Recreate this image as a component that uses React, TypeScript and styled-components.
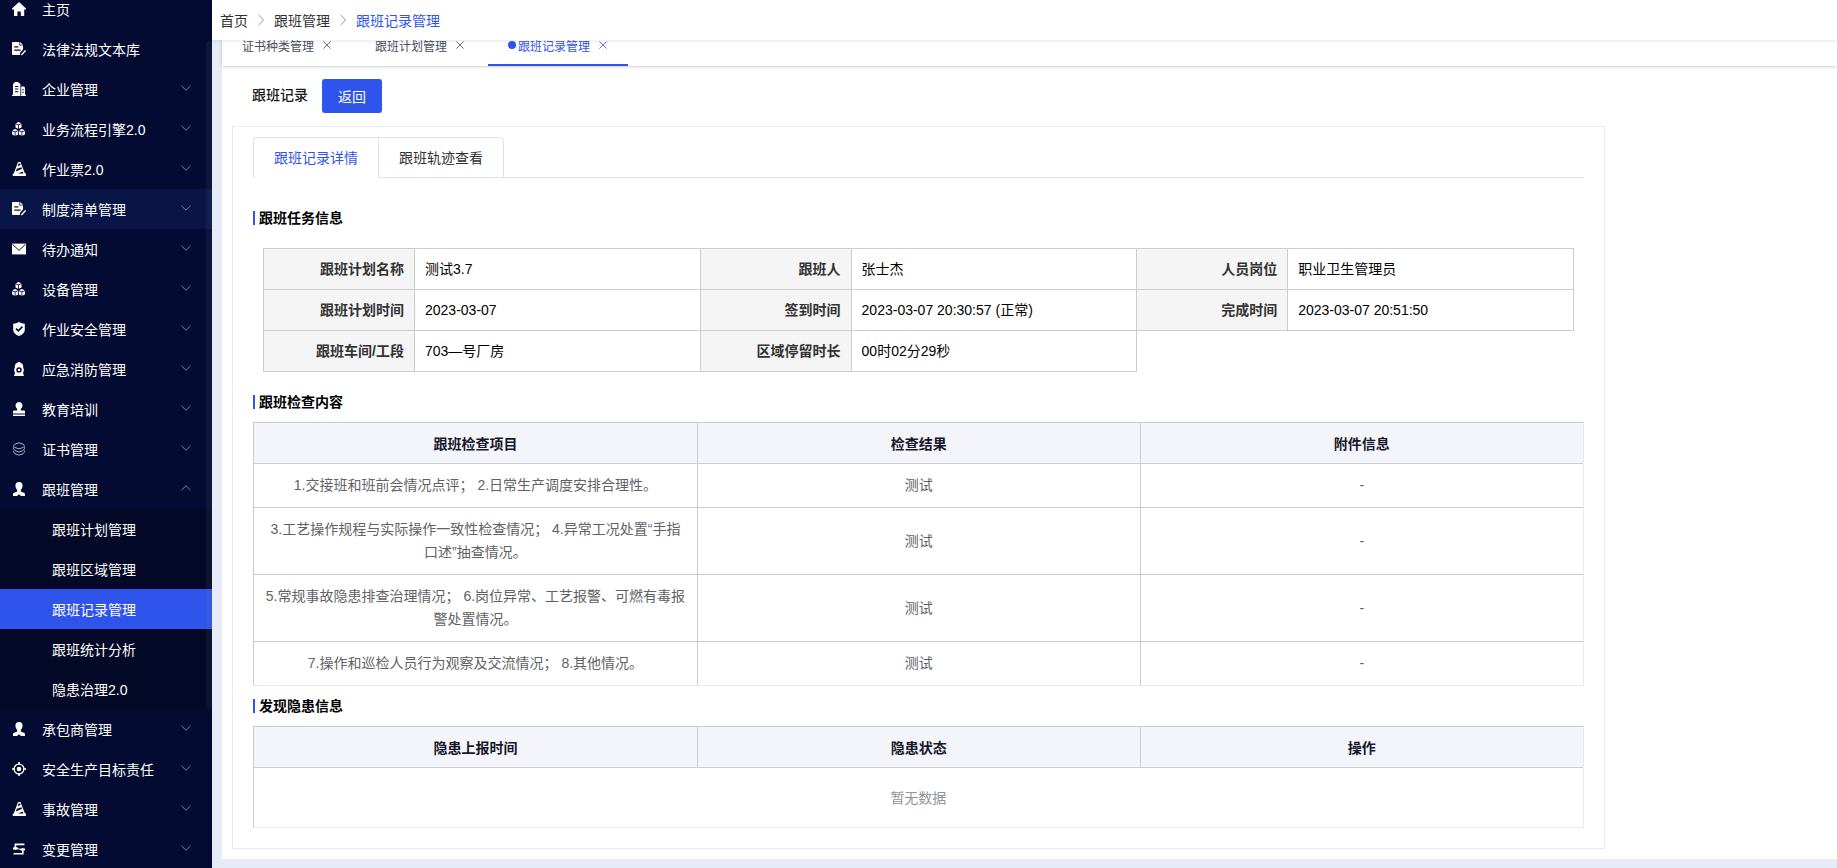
import React from "react";
import styled, { createGlobalStyle } from "styled-components";

const BLUE = "#2f54eb";
const FONT = '"Liberation Sans", "Noto Sans CJK SC", sans-serif';

const GlobalStyle = createGlobalStyle`
  *, *::before, *::after { box-sizing: border-box; }
  body { margin: 0; background: #e5ecf8; font-family: ${FONT}; font-size: 14px; color: #000; }
  button { font-family: inherit; font-size: inherit; cursor: pointer; border: 0; background: none; padding: 0; }
  a { color: inherit; text-decoration: none; }
`;

/* ---------- icons ---------- */

type IconName =
  | "home" | "doc" | "building" | "cubes" | "cone" | "mail" | "shield"
  | "hydrant" | "stamp" | "layers" | "user" | "aim" | "swap";

const glyphs: Record<IconName, React.ReactNode> = {
  home: <path fill="currentColor" d="M7 0 14 6.6V7.6H12.2V14H8.8V9.6H5.4V14H2V7.6H0V6.6Z" />,
  doc: (
    <>
      <path fill="currentColor" fillRule="evenodd" d="M1 0H7.4V3.6H11V7.6L8 10.8V13H1Q0 13 0 12V1Q0 0 1 0ZM2.2 4.2V5.4H6.4V4.2ZM2.2 7.6V8.8H8.6V7.6Z" />
      <path fill="currentColor" d="M8.2 0 11 2.8H8.2Z" />
      <path fill="none" stroke="currentColor" strokeWidth="1.5" d="M13.6 8.4 9.4 13" />
    </>
  ),
  building: (
    <>
      <path fill="currentColor" fillRule="evenodd" d="M1 2 3 0H6L8.4 2V14H1ZM3 4V5H6.4V4ZM3 6.6V7.6H6.4V6.6ZM3 9.2V10.2H6.4V9.2Z" />
      <path fill="currentColor" fillRule="evenodd" d="M9.2 4.6H12L13 5.8V12.8H14V14H9.2ZM10.4 7V8.2H11.6V7ZM10.4 9.8V11H11.6V9.8Z" />
      <path fill="currentColor" d="M0 12.8H3V14H0Z" />
    </>
  ),
  cubes: (
    <>
      {[[6.5, 0], [3.1, 7], [9.9, 7]].map(([x, y]) => (
        <g key={x} transform={`translate(${x} ${y})`}>
          <path fill="currentColor" d="M0 0 2.8 1.2 0 2.4-2.8 1.2ZM-3 2-.4 3.2V6.8L-3 5.6ZM3 2 .4 3.2V6.8L3 5.6Z" />
        </g>
      ))}
    </>
  ),
  cone: (
    <path fill="currentColor" fillRule="evenodd" d="M6 0H8.4L13 11.6H14V14H.8V11.6H1.8ZM6.6 1.6 5.6 4.2 8.6 3 8.2 1.6ZM4.8 6.8 3.8 9.4 10 6.8 9.4 5.2ZM6 11.4H11.4L10.6 9.4Z" />
  ),
  mail: (
    <>
      <path fill="currentColor" d="M0 1.6H14V12.4H0Z" />
      <path fill="none" stroke="#040b32" strokeWidth="1" d="M.6 2.4 7 8.4 13.4 2.4" />
    </>
  ),
  shield: (
    <>
      <path fill="currentColor" d="M7 0Q9.6 1.8 12.8 1.8V8Q12.4 12 7 14 1.6 12 1.2 8V1.8Q4.4 1.8 7 0Z" />
      <path fill="none" stroke="#040b32" strokeWidth="1.6" d="M4 6.6 6.4 8.8 10.4 4.6" />
    </>
  ),
  hydrant: (
    <path fill="currentColor" fillRule="evenodd" d="M5.8 0H8.2V.8Q11 1.4 11.2 4V6.4H11.8V9.6H11.2V12.6H11.8V14H2.2V12.6H2.8V9.6H2.2V6.4H2.8V4Q3 1.4 5.8 .8ZM7 5.2A2.7 2.7 0 1 0 7 10.6 2.7 2.7 0 1 0 7 5.2ZM7 6.7A1.2 1.2 0 1 1 7 9.1 1.2 1.2 0 1 1 7 6.7Z" />
  ),
  stamp: (
    <path fill="currentColor" d="M7 0A3.6 3.6 0 0 1 10 5.4L8.8 7V8.6H12Q13 8.6 13 9.6V11.4H1V9.6Q1 8.6 2 8.6H5.2V7L4 5.4A3.6 3.6 0 0 1 7 0ZM1 12.6H13V14H1Z" />
  ),
  layers: (
    <g fill="none" stroke="currentColor" strokeWidth=".9" opacity=".75">
      <path d="M7 .8Q12.6 2 12.6 4 12.6 5.6 7 6.8 1.4 5.6 1.4 4 1.4 2 7 .8Z" />
      <path d="M1.4 5.2V6.4Q1.8 9 7 10 12.2 9 12.6 6.4V5.2" />
      <path d="M1.4 8.6V9.8Q1.8 12.2 7 13.2 12.2 12.2 12.6 9.8V8.6" />
    </g>
  ),
  user: (
    <path fill="currentColor" d="M7 0Q10.6 0 10.6 3.8 10.6 6.4 8.8 8V9.4L12.4 11Q13 11.4 13 12V14H9L7 12.2 5 14H1V12Q1 11.4 1.6 11L5.2 9.4V8Q3.4 6.4 3.4 3.8 3.4 0 7 0Z" />
  ),
  aim: (
    <>
      <circle cx="7" cy="7" r="4.9" fill="none" stroke="currentColor" strokeWidth="1.3" />
      <circle cx="7" cy="7" r="2.3" fill="currentColor" />
      <path fill="none" stroke="currentColor" strokeWidth="1.6" d="M7 0V3M7 11V14M0 7H3M11 7H14" />
    </>
  ),
  swap: (
    <>
      <path fill="none" stroke="currentColor" strokeWidth="1.6" d="M12.4 2.4H3.4V6M1.6 11.8H10.8V8M6.6 6.8H1M7.4 7.2H13" />
      <path fill="currentColor" d="M.8 5.2H6L3.4 8ZM13.2 8.6H8.2L10.8 5.8Z" />
    </>
  ),
};

const Icon = ({ name }: { name: IconName }) => (
  <svg width="14" height="14" viewBox="0 0 14 14" aria-hidden="true">{glyphs[name]}</svg>
);

const Caret = ({ up }: { up?: boolean }) => (
  <svg width="10" height="6" viewBox="0 0 10 6" fill="none" stroke="#79809c" aria-hidden="true">
    <path d={up ? "M.5 5.2 5 .8 9.5 5.2" : "M.5.8 5 5.2 9.5.8"} />
  </svg>
);

/* ---------- shell ---------- */

const Shell = styled.div`
  display: flex;
  align-items: flex-start;
  min-height: 100vh;
`;

const Sidebar = styled.aside`
  position: sticky;
  top: 0;
  flex: 0 0 212px;
  height: 100vh;
  overflow: hidden;
  background: #040b32;
`;

const ScrollThumb = styled.div`
  position: absolute;
  top: 41px;
  right: 0;
  width: 6px;
  height: 77%;
  border-radius: 4px;
  background: rgba(144, 147, 153, 0.08);
`;

const Menu = styled.nav`
  margin-top: -11px;
`;

const MenuItem = styled.button<{ $hover?: boolean }>`
  display: flex;
  align-items: center;
  gap: 16px;
  width: 100%;
  height: 40px;
  padding: 0 21px 0 12px;
  color: #fff;
  text-align: left;
  background: ${(p) => (p.$hover ? "#091546" : "transparent")};
`;

const MenuLabel = styled.span`
  flex: 1;
  padding-top: 2px;
  line-height: 20px;
`;

const CaretSlot = styled.span`
  display: flex;
  padding-bottom: 3px;
`;

const SubMenu = styled.div`
  background: #030926;
`;

const SubItem = styled.a<{ $active?: boolean }>`
  display: block;
  height: 40px;
  padding-left: 52px;
  line-height: 42px;
  color: #fff;
  background: ${(p) => (p.$active ? BLUE : "transparent")};
`;

const Main = styled.main`
  flex: 1;
  min-width: 0;
`;

const Header = styled.header`
  position: sticky;
  top: 0;
  z-index: 2;
  display: flex;
  align-items: center;
  height: 40px;
  padding: 0 8px;
  background: #fff;
  box-shadow: 0 1px 4px rgba(0, 21, 41, 0.1);
`;

const Crumbs = styled.nav`
  display: flex;
  align-items: center;
  gap: 9px;
  color: #303133;
`;

const Crumb = styled.a<{ $current?: boolean }>`
  color: ${(p) => (p.$current ? BLUE : "inherit")};
`;

const Panel = styled.div`
  margin: -14px 0 9px 10px;
  padding-bottom: 10px;
  background: #fff;
`;

const PageTabs = styled.div`
  display: flex;
  gap: 3px;
  height: 40px;
  box-shadow: 0 1px 3px rgba(0, 0, 0, 0.2);
`;

const PageTab = styled.div<{ $active?: boolean }>`
  display: flex;
  align-items: center;
  padding: 0 20px;
  font-size: 12px;
  color: ${(p) => (p.$active ? BLUE : "#495060")};
  border-bottom: 2px solid ${(p) => (p.$active ? BLUE : "transparent")};
`;

const Dot = styled.span`
  width: 8px;
  height: 8px;
  margin-right: 2px;
  border-radius: 50%;
  background: ${BLUE};
`;

const CloseButton = styled.button`
  display: flex;
  justify-content: center;
  width: 18px;
  padding-left: 8px;
  color: inherit;
  opacity: 0.8;
`;

/* ---------- page ---------- */

const TitleRow = styled.div`
  display: flex;
  align-items: center;
  gap: 14px;
  padding: 13px 30px;
`;

const PageTitle = styled.h1`
  margin: 0;
  padding-bottom: 2px;
  font-size: 14px;
  font-weight: 500;
  line-height: 20px;
  color: #1a1a1a;
`;

const BackButton = styled.button`
  width: 60px;
  height: 34px;
  border-radius: 3px;
  color: #fff;
  background: ${BLUE};
`;

const Card = styled.section`
  width: 85%;
  margin-left: 10px;
  padding: 10px 20px 20px;
  border: 1px solid #ebebeb;
`;

const TabStrip = styled.div`
  display: flex;
  height: 41px;
  margin-bottom: 33px;
  border-bottom: 1px solid #dfe2ec;
`;

const TabGroup = styled.div`
  display: flex;
  height: 41px;
  border: 1px solid #dfe2ec;
  border-bottom: 0;
  border-radius: 4px 4px 0 0;
`;

const Tab = styled.button<{ $active?: boolean }>`
  padding: 0 20px 2px;
  color: ${(p) => (p.$active ? BLUE : "#303133")};
  border-bottom: 1px solid ${(p) => (p.$active ? "#fff" : "#dfe2ec")};

  & + & {
    border-left: 1px solid #dfe2ec;
  }
`;

const SectionTitle = styled.h2`
  margin: 13px 0;
  padding-left: 4px;
  border-left: 2px solid ${BLUE};
  font-size: 14px;
  font-weight: 700;
  line-height: 14px;
`;

const InfoWrap = styled.div`
  margin: 23px 10px;
`;

const InfoTable = styled.table`
  width: 100%;
  table-layout: fixed;
  border-collapse: collapse;
  line-height: 20px;

  th, td {
    padding: 10px;
    border: 1px solid #ccc;
  }
  th {
    color: #333;
    text-align: right;
    background: #f5f5f5;
  }
`;

const LabelCol = styled.col`
  width: 151px;
`;

const DataTable = styled.table`
  width: 100%;
  table-layout: fixed;
  border-collapse: separate;
  border-spacing: 0;
  border: 1px solid #e8e8f4;
  border-top-color: #ccc;
  border-left-color: #ccc;
  text-align: center;

  th {
    padding: 11px 10px 9px;
    color: #17182b;
    line-height: 20px;
    background: #f4f5fa;
    border-bottom: 1px solid #ccc;
  }
  td {
    padding: 10px;
    color: #606266;
    line-height: 23px;
  }
  tr + tr td {
    border-top: 1px solid #ccc;
  }
  th + th, td + td {
    border-left: 1px solid #ccc;
  }
  td[colspan] {
    padding: 19px 10px 17px;
    color: #909399;
  }
`;

type Entry = { icon: IconName; label: string; leaf?: boolean; hover?: boolean; children?: string[] };

const menu: Entry[] = [
  { icon: "home", label: "主页", leaf: true },
  { icon: "doc", label: "法律法规文本库", leaf: true },
  { icon: "building", label: "企业管理" },
  { icon: "cubes", label: "业务流程引擎2.0" },
  { icon: "cone", label: "作业票2.0" },
  { icon: "doc", label: "制度清单管理", hover: true },
  { icon: "mail", label: "待办通知" },
  { icon: "cubes", label: "设备管理" },
  { icon: "shield", label: "作业安全管理" },
  { icon: "hydrant", label: "应急消防管理" },
  { icon: "stamp", label: "教育培训" },
  { icon: "layers", label: "证书管理" },
  {
    icon: "user",
    label: "跟班管理",
    children: ["跟班计划管理", "跟班区域管理", "跟班记录管理", "跟班统计分析", "隐患治理2.0"],
  },
  { icon: "user", label: "承包商管理" },
  { icon: "aim", label: "安全生产目标责任" },
  { icon: "cone", label: "事故管理" },
  { icon: "swap", label: "变更管理" },
];

const current = "跟班记录管理";
const crumbs = ["首页", "跟班管理", current];
const pageTabs = ["证书种类管理", "跟班计划管理", current];

const info: [string, string][][] = [
  [["跟班计划名称", "测试3.7"], ["跟班人", "张士杰"], ["人员岗位", "职业卫生管理员"]],
  [["跟班计划时间", "2023-03-07"], ["签到时间", "2023-03-07 20:30:57 (正常)"], ["完成时间", "2023-03-07 20:51:50"]],
  [["跟班车间/工段", "703—号厂房"], ["区域停留时长", "00时02分29秒"]],
];

const checks = [
  "1.交接班和班前会情况点评； 2.日常生产调度安排合理性。",
  "3.工艺操作规程与实际操作一致性检查情况； 4.异常工况处置“手指口述”抽查情况。",
  "5.常规事故隐患排查治理情况； 6.岗位异常、工艺报警、可燃有毒报警处置情况。",
  "7.操作和巡检人员行为观察及交流情况； 8.其他情况。",
];

const HeadRow = ({ labels }: { labels: string[] }) => (
  <thead>
    <tr>{labels.map((l) => <th key={l} scope="col">{l}</th>)}</tr>
  </thead>
);

export default function App() {
  return (
    <Shell lang="zh-CN">
      <GlobalStyle />
      <Sidebar>
        <Menu aria-label="主菜单">
          {menu.map((m) => (
            <React.Fragment key={m.label}>
              <MenuItem $hover={m.hover} aria-expanded={m.leaf ? undefined : !!m.children}>
                <Icon name={m.icon} />
                <MenuLabel>{m.label}</MenuLabel>
                {!m.leaf && <CaretSlot><Caret up={!!m.children} /></CaretSlot>}
              </MenuItem>
              {m.children && (
                <SubMenu>
                  {m.children.map((c) => (
                    <SubItem key={c} href="#" $active={c === current}>{c}</SubItem>
                  ))}
                </SubMenu>
              )}
            </React.Fragment>
          ))}
        </Menu>
        <ScrollThumb />
      </Sidebar>

      <Main>
        <Header>
          <Crumbs aria-label="面包屑">
            {crumbs.map((c, i) => (
              <React.Fragment key={c}>
                {i > 0 && (
                  <svg width="8" height="12" viewBox="0 0 8 12" fill="none" stroke="#c0c4cc" strokeWidth="1.4" aria-hidden="true">
                    <path d="M1.8 1 6.4 6 1.8 11" />
                  </svg>
                )}
                <Crumb href="#" $current={c === current}>{c}</Crumb>
              </React.Fragment>
            ))}
          </Crumbs>
        </Header>

        <Panel>
          <PageTabs>
            {pageTabs.map((t) => (
              <PageTab key={t} $active={t === current}>
                {t === current && <Dot />}
                <a href="#">{t}</a>
                <CloseButton aria-label={`关闭${t}`}>
                  <svg width="8" height="8" viewBox="0 0 8 8" stroke="currentColor" fill="none" aria-hidden="true">
                    <path d="M.4.4 7.6 7.6M7.6.4.4 7.6" />
                  </svg>
                </CloseButton>
              </PageTab>
            ))}
          </PageTabs>

          <TitleRow>
            <PageTitle>跟班记录</PageTitle>
            <BackButton>返回</BackButton>
          </TitleRow>

          <Card>
            <TabStrip>
              <TabGroup role="tablist">
                <Tab role="tab" aria-selected $active>跟班记录详情</Tab>
                <Tab role="tab" aria-selected={false}>跟班轨迹查看</Tab>
              </TabGroup>
            </TabStrip>

            <SectionTitle>跟班任务信息</SectionTitle>
            <InfoWrap>
              <InfoTable>
                <colgroup>
                  <LabelCol /><col /><LabelCol /><col /><LabelCol /><col />
                </colgroup>
                <tbody>
                  {info.map((row) => (
                    <tr key={row[0][0]}>
                      {row.map(([label, value]) => (
                        <React.Fragment key={label}>
                          <th scope="row">{label}</th>
                          <td>{value}</td>
                        </React.Fragment>
                      ))}
                    </tr>
                  ))}
                </tbody>
              </InfoTable>
            </InfoWrap>

            <SectionTitle>跟班检查内容</SectionTitle>
            <DataTable>
              <HeadRow labels={["跟班检查项目", "检查结果", "附件信息"]} />
              <tbody>
                {checks.map((c) => (
                  <tr key={c}>
                    <td>{c}</td>
                    <td>测试</td>
                    <td>-</td>
                  </tr>
                ))}
              </tbody>
            </DataTable>

            <SectionTitle>发现隐患信息</SectionTitle>
            <DataTable>
              <HeadRow labels={["隐患上报时间", "隐患状态", "操作"]} />
              <tbody>
                <tr><td colSpan={3}>暂无数据</td></tr>
              </tbody>
            </DataTable>
          </Card>
        </Panel>
      </Main>
    </Shell>
  );
}
